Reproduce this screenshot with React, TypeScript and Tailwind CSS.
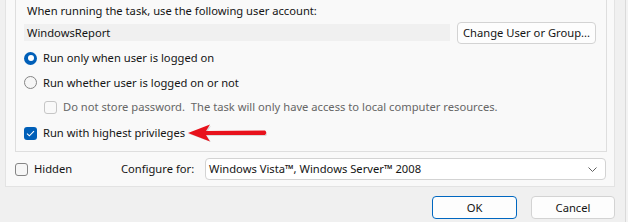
import React from 'react';

function Radio({ checked }: { checked?: boolean }) {
  return checked ? (
    <span className="w-[13px] h-[13px] rounded-full bg-[#005fb8] flex items-center justify-center shrink-0">
      <span className="w-[6px] h-[6px] rounded-full bg-white" />
    </span>
  ) : (
    <span className="w-[13px] h-[13px] rounded-full border border-[#858585] bg-[#f6f6f6] shrink-0" />
  );
}

function Check({ checked, disabled }: { checked?: boolean; disabled?: boolean }) {
  if (checked) {
    return (
      <span className="w-[13px] h-[13px] rounded-[3px] bg-[#005fb8] flex items-center justify-center shrink-0">
        <svg width="9" height="7" viewBox="0 0 9 7">
          <path d="M1 3.6 L3.4 5.8 L8 1.2" fill="none" stroke="white" strokeWidth="1.1" />
        </svg>
      </span>
    );
  }
  return (
    <span
      className={`w-[13px] h-[13px] rounded-[3px] border shrink-0 ${
        disabled ? 'border-[#c6c6c6] bg-[#f9f9f9]' : 'border-[#858585] bg-[#f6f6f6]'
      }`}
    />
  );
}

function Arrow() {
  return (
    <svg width="80" height="18" viewBox="0 0 80 18" className="ml-[3px] shrink-0">
      <path d="M1 10 L23 2 L19 8.5 L78 8 Q80 10 78 12 L19 12 L23 18 Z" fill="#000" opacity="0.12" />
      <path d="M0 9 L22 0.5 L18 7 L77 6.6 Q79.5 8.8 77 11 L18 11 L22 17.5 Z" fill="#e8121c" />
    </svg>
  );
}

export default function App() {
  return (
    <div className="w-[628px] h-[222px] bg-[#f0f0f0] flex overflow-hidden text-[#141414] text-[11.2px] font-['Noto_Sans',sans-serif] leading-none">
      <div className="w-[625px] flex flex-col">
        {/* tab page */}
        <div className="ml-[5px] w-[610px] h-[187px] bg-[#f9f9f9] border-x border-b border-[#e3e3e3] flex flex-col">
          {/* security options group */}
          <div className="ml-[9px] w-[592px] h-[152px] border-x border-b border-[#dedede] pl-[8px] flex flex-col">
            <div className="h-[21px] flex items-center pl-[3px] pt-[1px]">
              When running the task, use the following user account:
            </div>
            <div className="h-[23px] flex items-center">
              <div className="w-[426px] h-[17px] bg-[#f0f0f0] flex items-center pl-[3px]">WindowsReport</div>
              <button className="ml-[7px] w-[139px] h-[22px] bg-[#fdfdfd] border border-[#d3d3d3] rounded-[4px] flex items-center justify-center">
                Change User or Group...
              </button>
            </div>
            <div className="mt-[2px] h-[24px] flex items-center gap-[6px]">
              <Radio checked />
              <span>Run only when user is logged on</span>
            </div>
            <div className="h-[25px] flex items-center gap-[6px]">
              <Radio />
              <span>Run whether user is logged on or not</span>
            </div>
            <div className="h-[24px] flex items-center gap-[6px] pl-[20px]">
              <Check disabled />
              <span className="text-[#666666] whitespace-pre">
                {'Do not store password.  The task will only have access to local computer resources.'}
              </span>
            </div>
            <div className="mt-[2px] h-[24px] flex items-center">
              <Check checked />
              <span className="ml-[6px]">Run with highest privileges</span>
              <Arrow />
            </div>
          </div>
          {/* hidden / configure for */}
          <div className="mt-[6px] h-[22px] flex items-center pl-[9px]">
            <Check />
            <span className="ml-[6px] w-[87px]">Hidden</span>
            <span className="w-[84px]">Configure for:</span>
            <div className="w-[401px] h-[22px] bg-white border border-[#d3d3d3] rounded-[4px] flex items-center pl-[3px] pr-[8px]">
              <span className="flex-1">Windows Vista™, Windows Server™ 2008</span>
              <svg width="9" height="5" viewBox="0 0 9 5">
                <path d="M0.5 0.5 L4.5 4.5 L8.5 0.5" fill="none" stroke="#606060" strokeWidth="1" />
              </svg>
            </div>
          </div>
        </div>
        {/* dialog buttons */}
        <div className="mt-[9px] h-[23px] flex justify-end pr-[10px] gap-[14px]">
          <button className="w-[85px] h-[23px] bg-[#fdfdfd] border border-[#0067c0] rounded-[4px] flex items-center justify-center">
            OK
          </button>
          <button className="w-[84px] h-[23px] bg-[#fdfdfd] border border-[#d3d3d3] rounded-[4px] flex items-center justify-center">
            Cancel
          </button>
        </div>
      </div>
      <div className="w-px bg-[#dadada]" />
      <div className="w-[2px] bg-[#f3f3f3]" />
    </div>
  );
}
